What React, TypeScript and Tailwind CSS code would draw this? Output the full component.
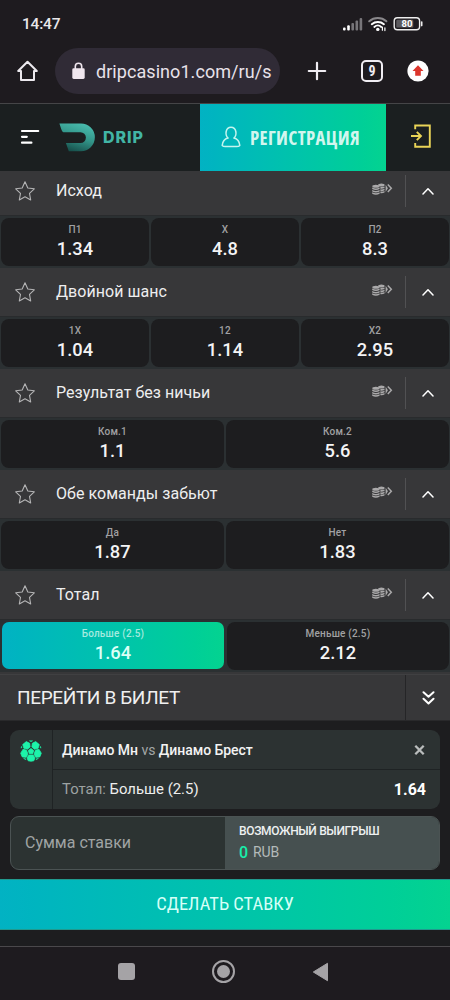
import React from "react";

type Odd = { label: string; value: string; active?: boolean };
type Market = { name: string; odds: Odd[] };

const markets: Market[] = [
  { name: "Исход", odds: [{ label: "П1", value: "1.34" }, { label: "X", value: "4.8" }, { label: "П2", value: "8.3" }] },
  { name: "Двойной шанс", odds: [{ label: "1X", value: "1.04" }, { label: "12", value: "1.14" }, { label: "X2", value: "2.95" }] },
  { name: "Результат без ничьи", odds: [{ label: "Ком.1", value: "1.1" }, { label: "Ком.2", value: "5.6" }] },
  { name: "Обе команды забьют", odds: [{ label: "Да", value: "1.87" }, { label: "Нет", value: "1.83" }] },
  { name: "Тотал", odds: [{ label: "Больше (2.5)", value: "1.64", active: true }, { label: "Меньше (2.5)", value: "2.12" }] },
];

function StatusIcons() {
  return (
    <svg width="84" height="18" viewBox="0 0 84 18" fill="none">
      <g fill="#fff">
        <rect x="1" y="12.5" width="2.6" height="3" rx="1" />
        <rect x="5.2" y="10.3" width="2.6" height="5.2" rx="1" />
        <g fill="#777579">
          <rect x="9.4" y="8" width="2.6" height="7.5" rx="1" />
          <rect x="13.5" y="5.5" width="2.6" height="10" rx="1" />
          <rect x="17.6" y="3" width="2.6" height="12.5" rx="1" />
        </g>
      </g>
      <g strokeLinecap="round">
        <path d="M27.2 6.3c5-4.3 12.200-4.300 17.200 0" stroke="#89878a" strokeWidth="2" />
        <path d="M29.800 9.200c3.500-3 8.600-3 12.100 0" stroke="#fff" strokeWidth="2" />
        <path d="M32.300 12c2.200-1.900 5-1.900 7 0" stroke="#fff" strokeWidth="1.800" />
        <path d="M40.400 12v3.200M42.900 12.800v2.800" stroke="#fff" strokeWidth="1.200" />
      </g>
      <circle cx="35.800" cy="14.400" r="1.700" fill="#fff" />
      <rect x="52.200" y="2.700" width="25.400" height="12" rx="3.200" stroke="#eee" strokeWidth="1.400" />
      <rect x="54.300" y="4.800" width="17" height="7.800" rx="1.200" fill="#5c5a5e" />
      <path d="M79.700 7v3.600" stroke="#eee" strokeWidth="1.600" strokeLinecap="round" />
      <text x="65" y="12.200" textAnchor="middle" fontFamily="Roboto, sans-serif" fontWeight="700" fontSize="9.500" fill="#fff">80</text>
    </svg>
  );
}

function Browser() {
  return (
    <>
      <div className="flex h-[48px] items-center justify-between pl-[22px] pr-[24px]">
        <span className="pt-[2px] text-[15.500px] font-medium leading-none tracking-[-.2px] text-[#e9e7ea]">14:47</span>
        <StatusIcons />
      </div>
      <div className="flex h-[55px] items-start">
        <svg className="ml-[16px] mt-[11px] shrink-0" width="23" height="24" viewBox="0 0 23 24" fill="none" stroke="#ece9ee" strokeWidth="2" strokeLinejoin="round" strokeLinecap="round">
          <path d="M2.200 12 11.500 2.700 20.800 12H18v8.900H5V12z" />
        </svg>
        <div className="ml-[16px] flex h-[46px] w-[225px] shrink-0 items-center rounded-full bg-[#302b36] pl-[17px]">
          <svg width="13" height="18" viewBox="0 0 13 18">
            <path d="M3.300 7V4.500a3.200 3.200 0 0 1 6.400 0V7" fill="none" stroke="#efe6ee" strokeWidth="1.600" />
            <rect x=".3" y="6.300" width="12.400" height="10.700" rx="1.400" fill="#efe6ee" />
          </svg>
          <span className="ml-[11px] whitespace-nowrap pt-[1px] text-[18px] leading-[24px] tracking-[.06px] text-[#e8e2ea]">dripcasino1.com/ru/s</span>
        </div>
        <svg className="ml-[27px] mt-[13px] shrink-0" width="20" height="20" viewBox="0 0 20 20" stroke="#f0edf2" strokeWidth="2.200" strokeLinecap="round">
          <path d="M10 1.800v16.400M1.800 10h16.400" />
        </svg>
        <div className="ml-[34px] mt-[12px] flex size-[22px] shrink-0 items-center justify-center rounded-[5px] border-2 border-[#f0edf2] text-[14px] font-bold leading-none text-[#f0edf2] [font-stretch:75%]">9</div>
        <svg className="ml-[24px] mt-[12px] shrink-0" width="22" height="22" viewBox="0 0 22 22">
          <circle cx="11" cy="11" r="10.600" fill="#fff" />
          <path d="M11 5.300 16.500 11h-2.700v4.700H8.200V11H5.500z" fill="#dc352c" />
        </svg>
      </div>
    </>
  );
}

function SiteHeader() {
  return (
    <header className="flex h-[68px] border-t border-[#454547] bg-[#1b1f20]">
      <div className="flex w-[200px] items-start pl-[20px] pt-[19px]">
        <svg className="mt-[6px]" width="20" height="16" viewBox="0 0 20 16" stroke="#fff" strokeWidth="2.200" strokeLinecap="round">
          <path d="M2 2h16.200M2 7.800h4.800M2 13.700h9.400" />
        </svg>
        <svg className="ml-[19px]" width="37" height="30" viewBox="0 0 37 30">
          <defs>
            <linearGradient id="drip" x1=".7" y1="0" x2=".3" y2="1">
              <stop offset="0" stopColor="#49bcae" />
              <stop offset=".5" stopColor="#329488" />
              <stop offset="1" stopColor="#164d49" />
            </linearGradient>
          </defs>
          <path d="M.4 .5H22a13.800 13.800 0 0 1 0 27.700H9.800L6.900 20H21.500a5.400 5.400 0 0 0 0-10.800H4.300Q3 8.500 2.300 6.200z" fill="url(#drip)" />
        </svg>
        <span className="ml-[7px] mt-[4px] font-[Inter,sans-serif] text-[16px] font-extrabold leading-[20px] tracking-[.9px] text-[#42b5a6]">DRIP</span>
      </div>
      <button className="flex w-[186px] items-center bg-linear-to-r from-[#02b2c3] to-[#04d390] pl-[21px]">
        <svg className="relative -top-px" width="20" height="22" viewBox="0 0 20 22" fill="none" stroke="#c4f5ef" strokeWidth="1.500" strokeLinejoin="round">
          <path d="M7.100 12.100C3.600 9 4.500 1.200 10 1.200s6.400 7.800 2.900 10.900c3.400.8 5.500 3.400 5.900 7.300q-1 1.100-3 1.100H4.200q-2 0-3-1.100c.4-3.900 2.500-6.500 5.900-7.300z" />
        </svg>
        <span className="ml-[9px] whitespace-nowrap text-left font-['Open_Sans',sans-serif] text-[18.800px] font-bold leading-[24px] tracking-[.35px] text-[#d2f6ee] [font-stretch:75%]">РЕГИСТРАЦИЯ</span>
      </button>
      <div className="flex flex-1 items-start pl-[24px] pt-[19px]">
        <svg width="22" height="26" viewBox="0 0 22 26" fill="none" stroke="#ead457" strokeWidth="1.900">
          <path d="M5.200 6.300V2.500h14.600v21.300H5.200V20M1 13h9.500M6.800 8.800l4.200 4.200-4.200 4.200" />
        </svg>
      </div>
    </header>
  );
}

function Coins() {
  return (
    <svg className="relative -top-[2px]" width="21" height="13" viewBox="0 0 21 13" fill="none">
      <g fill="#aaa9aa">
        <ellipse cx="3.900" cy="3.200" rx="3.600" ry="1.500" />
        <path d="M.2 4.500q3.700 2 7.400 0v1.600q-3.700 2-7.400 0zM.2 6.900q3.700 2 7.400 0v1.600q-3.700 2-7.400 0zM.2 9.300q3.700 2 7.400 0v1.500q-3.700 2-7.400 0z" />
        <ellipse cx="9.400" cy="2" rx="3.200" ry="1.500" />
        <path d="M8.400 4q2.300.4 4.100-.6V5q-1.800 1-4.100.8zM8.400 6.300q2.300.4 4.100-.6v1.600q-1.800 1-4.100.8zM8.400 8.600q2.300.4 4.100-.6v1.500q-1.800 1-4.100.7z" />
        <path d="M13.600 1.700v7.200l2.300-3.600z" />
      </g>
      <path d="m15.800 1.600 3.500 3.700L15.800 9" stroke="#aaa9aa" strokeWidth="1.500" />
    </svg>
  );
}

function MarketBlock({ market }: { market: Market }) {
  return (
    <section>
      <div className="flex h-[49px] items-center border-b border-[#292b2d] bg-[#373739] pl-[15px]">
        <svg className="relative -top-[.5px]" width="20" height="20" viewBox="0 0 20 20" fill="none" stroke="#b4b4b5" strokeWidth="1.100" strokeLinejoin="round">
          <path d="m10 .8 2.800 6.200 6.500.8-4.800 4.600 1.200 6.600L10 15.800 4.300 19l1.200-6.600L.7 7.800l6.500-.8z" />
        </svg>
        <span className="ml-[21px] flex-1 text-[16px] leading-[24px] tracking-[.04px] text-[#eeeeef]">{market.name}</span>
        <Coins />
        <span className="ml-[12px] h-[32px] w-px bg-[#515153]" />
        <span className="flex w-[44px] justify-center">
          <svg width="12" height="8" viewBox="0 0 12 8" fill="none" stroke="#fff" strokeWidth="1.500" strokeLinejoin="round" strokeLinecap="round">
            <path d="m1 7 5-5.300L11 7" />
          </svg>
        </span>
      </div>
      <div className="flex h-[52px] gap-[2px] bg-[#2b3032] px-[1px] pt-[2px]">
        {market.odds.map((odd) => (
          <button
            key={odd.label}
            className={
              odd.active
                ? "mr-px ml-px h-[47px] w-0 flex-1 rounded-[7px] bg-linear-to-r from-[#02b2c3] to-[#04d390] text-[#dcfff6]"
                : "h-[48px] w-0 flex-1 rounded-[8px] bg-[#1d1d1f] pb-[1px] text-[#f4f4f5]"
            }
          >
            <span className={odd.active ? "block text-[10px] font-medium leading-[14px] tracking-[.2px] text-[#a5eadf]" : "block text-[10px] font-medium leading-[14px] tracking-[.2px] text-[#a1a1a3]"}>{odd.label}</span>
            <span className="block text-[18.300px] font-medium leading-[23px]">{odd.value}</span>
          </button>
        ))}
      </div>
    </section>
  );
}

function Ball() {
  return (
    <svg width="22" height="22" viewBox="0 0 22 22" fill="#1df4aa" stroke="#1df4aa" strokeWidth=".8" strokeLinejoin="round">
      <path d="m11 8.500 2.700 2-1 3.200H9.300l-1-3.200z" />
      <path d="m6.300 1.600 3.400 1.700.4 3.800-2.700 2.200-3.500-1.100-1.200-3.600zM15.700 1.600l-3.400 1.700-.4 3.800 2.700 2.200 3.500-1.100 1.200-3.600z" />
      <path d="m3.100 9.200 3.500 1.100 1.400 4.100-2.100 2.900-3.700-.4-1.500-3.700zM18.900 9.200l-3.500 1.100-1.400 4.100 2.100 2.900 3.700-.4 1.500-3.700z" />
      <path d="M9 15h4l2.100 2.700-1.300 3.100q-2.800.8-5.600 0l-1.300-3.100z" />
      <path d="M9.300.8q1.700-.3 3.400 0L11 1.700zM.9 8.200l.6-2 .6 1.300zM21.100 8.200l-.6-2-.6 1.300zM3.500 18.500l1.900.1.700 1.300zM18.500 18.500l-1.900.1-.7 1.300z" strokeWidth=".4" />
    </svg>
  );
}

function Ticket() {
  return (
    <>
      <div className="flex h-[47px] border-b border-t border-b-[#29292b] border-t-[#404042] bg-[#373739]">
        <span className="flex w-[406px] items-center whitespace-nowrap border-r border-[#252527] pl-[17px] text-[19px] leading-none tracking-[-.36px] text-[#f0f0f1]">ПЕРЕЙТИ В БИЛЕТ</span>
        <span className="flex flex-1 items-center justify-center">
          <svg width="13" height="14" viewBox="0 0 13 14" fill="none" stroke="#fff" strokeWidth="2" strokeLinecap="round" strokeLinejoin="round">
            <path d="m1.500 1.200 5 4.600 5-4.600M1.500 7.700l5 4.700 5-4.700" />
          </svg>
        </span>
      </div>
      <div className="h-[158px] bg-[#1d1d1f] px-[10px] pt-[9px]">
        <div className="flex h-[79px] overflow-hidden rounded-[9px] bg-[#2c3232]">
          <div className="flex w-[43px] justify-center border-r border-[#1f2324] pt-[10px]"><Ball /></div>
          <div className="flex-1">
            <div className="flex h-[40px] items-center border-b border-[#1f2324] pl-[9px] pr-[15px]">
              <span className="flex-1 whitespace-nowrap pt-px text-[14px] font-medium tracking-[-.03px] text-[#f3f3f3]">Динамо Мн <span className="font-normal text-[#a4a7a8]">vs</span> Динамо Брест</span>
              <svg width="11" height="10" viewBox="0 0 11 10" stroke="#b9bcbc" strokeWidth="2.300"><path d="m1.300.8 8.400 8.400M9.700.8 1.300 9.200" /></svg>
            </div>
            <div className="flex h-[39px] items-center justify-between pl-[9px] pr-[14px]">
              <span className="text-[14.900px] text-[#eeeeee]"><span className="text-[#9da2a2]">Тотал:</span> Больше (2.5)</span>
              <span className="text-[16px] font-bold text-white">1.64</span>
            </div>
          </div>
        </div>
        <div className="mt-[7px] flex h-[54px] overflow-hidden rounded-[9px] border border-[#4b5353] bg-[#2c3332]">
          <div className="flex w-[214px] items-center pl-[14px] text-[16px] text-[#a0a4a4]">Сумма ставки</div>
          <div className="flex-1 bg-[#465050] pl-[14px] pt-[5px]">
            <div className="whitespace-nowrap text-[12px] font-medium leading-[18px] tracking-[-.35px] text-[#eef1f1]">ВОЗМОЖНЫЙ ВЫИГРЫШ</div>
            <div className="flex items-center leading-[23px] text-[#b4baba]"><span className="text-[16px] font-medium text-[#18edaa]">0</span><span className="ml-[5px] pt-px text-[14px] tracking-[-.2px]">RUB</span></div>
          </div>
        </div>
      </div>
      <button className="flex h-[51px] items-center justify-center border-b border-t border-[#21998e] bg-linear-to-r from-[#02b2c3] to-[#04d390]">
        <span className="whitespace-nowrap text-[18.500px] text-[#d5fff7] [font-stretch:75%]">СДЕЛАТЬ СТАВКУ</span>
      </button>
      <div className="h-[16px] bg-[#1d1d1f]" />
    </>
  );
}

function SystemNav() {
  return (
    <nav className="flex h-[54px] items-start border-t border-[#4a484b] bg-[#1e1b1f] pt-[13px]">
      <span className="ml-[118px] mt-[3px] size-[17px] rounded-[3px] bg-[#a5a3a6]" />
      <span className="ml-[77px] flex size-[23px] items-center justify-center rounded-full border-2 border-[#a5a3a6]">
        <span className="size-[13px] rounded-full bg-[#a5a3a6]" />
      </span>
      <svg className="ml-[77px] mt-[2px]" width="17" height="20" viewBox="0 0 17 20" fill="#a5a3a6" stroke="#a5a3a6" strokeLinejoin="round"><path d="M1.300 10 15.500 1.300v17.400z" /></svg>
    </nav>
  );
}

export default function App() {
  return (
    <div className="flex h-[1000px] w-[450px] flex-col overflow-hidden bg-[#1e1b1f] font-[Roboto,'Liberation_Sans',sans-serif]">
      <Browser />
      <SiteHeader />
      <main className="flex h-[503px] shrink-0 flex-col justify-end overflow-hidden bg-[#373739] pb-[2px]">
        {markets.map((market) => <MarketBlock key={market.name} market={market} />)}
      </main>
      <Ticket />
      <SystemNav />
    </div>
  );
}
